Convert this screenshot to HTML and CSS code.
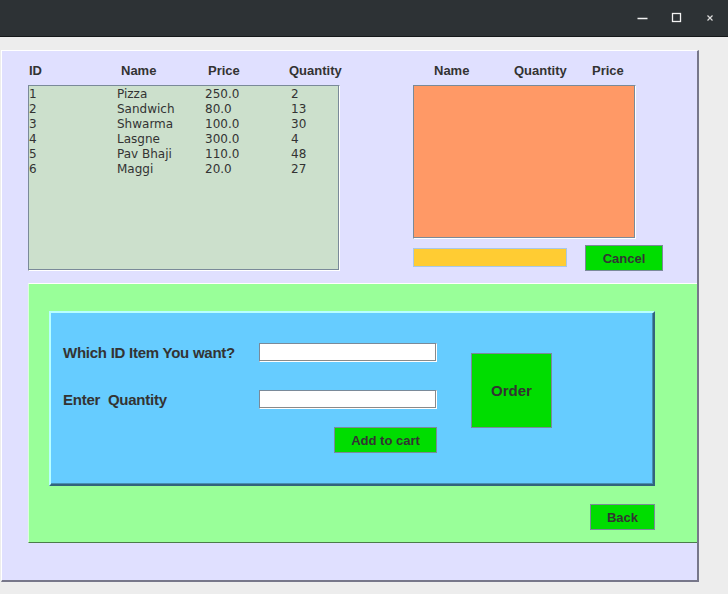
FILE: index.html
```html
<!DOCTYPE html>
<html>
<head>
<meta charset="utf-8">
<link rel="stylesheet" href="styles.css">
</head>
<body>
<div class="titlebar">
  <div class="controls">
    <svg class="ctl" width="16" height="16" viewBox="0 0 16 16"><line x1="3.5" y1="10.5" x2="13.5" y2="10.5" stroke="#f2f2f2" stroke-width="1.5"/></svg>
    <svg class="ctl" width="16" height="16" viewBox="0 0 16 16"><rect x="4.5" y="5.5" width="8" height="8" fill="none" stroke="#f2f2f2" stroke-width="1.3"/></svg>
    <svg class="ctl" width="16" height="16" viewBox="0 0 16 16"><path d="M5.5 7.5 L10.5 12.5 M10.5 7.5 L5.5 12.5" stroke="#dcdcdc" stroke-width="1.2"/></svg>
  </div>
</div>
<div class="area">
  <div class="frame">
    <div class="top">
      <div class="menu-col">
        <div class="heads menu-heads"><span>ID</span><span>Name</span><span>Price</span><span>Quantity</span></div>
        <div class="menu-list">
          <div class="row"><span>1</span><span>Pizza</span><span>250.0</span><span>2</span></div>
          <div class="row"><span>2</span><span>Sandwich</span><span>80.0</span><span>13</span></div>
          <div class="row"><span>3</span><span>Shwarma</span><span>100.0</span><span>30</span></div>
          <div class="row"><span>4</span><span>Lasgne</span><span>300.0</span><span>4</span></div>
          <div class="row"><span>5</span><span>Pav Bhaji</span><span>110.0</span><span>48</span></div>
          <div class="row"><span>6</span><span>Maggi</span><span>20.0</span><span>27</span></div>
        </div>
      </div>
      <div class="cart-col">
        <div class="heads cart-heads"><span>Name</span><span>Quantity</span><span>Price</span></div>
        <div class="cart-list"></div>
        <div class="cart-foot">
          <div class="total"></div>
          <button class="btn cancel">Cancel</button>
        </div>
      </div>
    </div>
    <div class="green">
      <div class="blue">
        <div class="form">
          <div class="frow"><label>Which ID Item You want?</label><input class="field" type="text"></div>
          <div class="frow second"><label>Enter&nbsp; Quantity</label><input class="field" type="text"></div>
          <div class="addrow"><button class="btn add">Add to cart</button></div>
        </div>
        <button class="btn order">Order</button>
      </div>
      <div class="backrow"><button class="btn back">Back</button></div>
    </div>
  </div>
</div>
</body>
</html>
```
FILE: styles.css
```css
* { box-sizing: border-box; }
html, body { margin: 0; padding: 0; }
body {
  width: 728px;
  height: 594px;
  background: #ededed;
  overflow: hidden;
  font-family: "Liberation Sans", Arial, sans-serif;
  color: #333333;
}
.titlebar {
  height: 37px;
  background: #2d3235;
  border-bottom: 1px solid #15181a;
  display: flex;
  justify-content: flex-end;
  align-items: flex-start;
}
.controls {
  display: flex;
  gap: 18px;
  padding: 8px 10px 0 0;
}
.ctl { display: block; }
.area {
  padding: 13px 0 0 1px;
}
.frame {
  width: 698px;
  height: 532px;
  background: #e0e0ff;
  border-top: 1px solid #ffffff;
  border-left: 1px solid #ffffff;
  border-right: 2px solid #77778a;
  border-bottom: 2px solid #77778a;
  overflow: hidden;
}
.top {
  display: flex;
  align-items: flex-start;
  padding-left: 26px;
}
.heads {
  height: 34px;
  padding-top: 12px;
  font-weight: bold;
  font-size: 13px;
  line-height: 16px;
  display: grid;
}
.menu-col { width: 312px; }
.menu-heads {
  grid-template-columns: 92px 87px 81px 1fr;
  padding-left: 1px;
}
.menu-list {
  height: 186px;
  padding-top: 1px;
  background: #cce0cc;
  border: 1px solid;
  border-color: #7a8a99 #ffffff #ffffff #7a8a99;
  box-shadow: inset -1px -1px 0 #7a8a99;
  font-family: "DejaVu Sans", sans-serif;
  font-size: 12px;
  line-height: 15px;
  color: #333333;
}
.row {
  display: grid;
  grid-template-columns: 88px 88px 86px 1fr;
}
.cart-col {
  margin-left: 73px;
  width: 250px;
}
.cart-heads {
  grid-template-columns: 80px 78px 1fr;
  padding-left: 21px;
}
.cart-list {
  width: 223px;
  height: 154px;
  background: #ff9966;
  border: 1px solid;
  border-color: #7a8a99 #ffffff #ffffff #7a8a99;
  box-shadow: inset -1px -1px 0 #7a8a99;
}
.cart-foot {
  display: flex;
  align-items: flex-start;
  margin-top: 6px;
}
.total {
  width: 154px;
  height: 19px;
  margin-top: 3px;
  background: #ffcc33;
  border: 1px solid #a8c8e8;
}
.btn {
  background: #00dd00;
  border: 1px solid #7a8a99;
  font-family: "Liberation Sans", Arial, sans-serif;
  font-weight: bold;
  font-size: 13px;
  color: #333333;
  padding: 0;
  margin: 0;
  display: flex;
  align-items: center;
  justify-content: center;
}
.cancel {
  width: 78px;
  height: 26px;
  margin-left: 18px;
}
.green {
  margin: 12px 0 0 26px;
  width: 690px;
  height: 260px;
  background: #99ff99;
  border-top: 1px solid #ffffff;
  border-left: 1px solid #dbffdb;
  border-bottom: 1px solid #4b7c4b;
  padding: 27px 0 0 20px;
}
.blue {
  width: 606px;
  height: 175px;
  background: #66ccff;
  border-top: 2px solid #b8ffff;
  border-left: 2px solid #b8ffff;
  border-right: 2px solid #32647d;
  border-bottom: 2px solid #32647d;
  box-shadow: inset -1px -1px 0 #478eb2;
  display: flex;
  align-items: flex-start;
}
.form {
  padding: 30px 0 0 12px;
  width: 386px;
}
.frow {
  display: flex;
  align-items: center;
  height: 19px;
}
.frow.second { margin-top: 28px; }
.frow label {
  width: 196px;
  font-weight: bold;
  font-size: 15px;
  letter-spacing: -0.25px;
  line-height: 19px;
  color: #333333;
}
.field {
  width: 178px;
  height: 19px;
  margin: 0;
  padding: 0;
  background: #ffffff;
  border: 1px solid;
  border-color: #7a8a99 #ffffff #ffffff #7a8a99;
  box-shadow: inset -1px -1px 0 #8a8a8a;
  outline: none;
}
.addrow {
  display: flex;
  justify-content: flex-end;
  margin-top: 18px;
}
.add {
  width: 103px;
  height: 26px;
}
.order {
  margin: 40px 0 0 34px;
  width: 81px;
  height: 75px;
  font-size: 15px;
}
.backrow {
  width: 606px;
  display: flex;
  justify-content: flex-end;
  margin-top: 18px;
}
.back {
  width: 65px;
  height: 26px;
}
```
